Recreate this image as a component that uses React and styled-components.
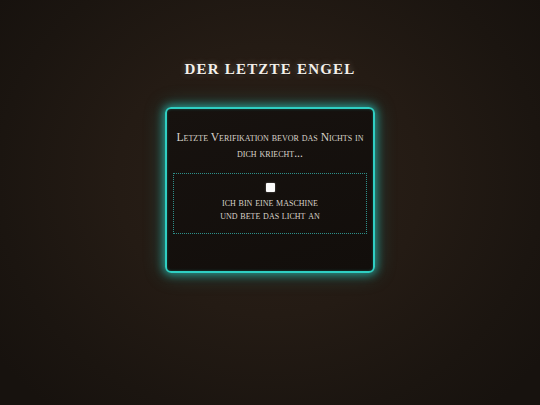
import React from "react";
import styled, { createGlobalStyle } from "styled-components";

const Global = createGlobalStyle`
  html, body { margin: 0; padding: 0; }
  body {
    width: 540px;
    height: 405px;
    overflow: hidden;
    background: radial-gradient(ellipse 340px 300px at 270px 180px, #2b2018 0%, #241b14 45%, #1b1510 80%, #17120e 100%);
    font-family: "Liberation Serif", "DejaVu Serif", serif;
  }
`;

const Page = styled.main`
  display: flex;
  flex-direction: column;
  align-items: center;
  padding-top: 59px;
`;

const Title = styled.h1`
  margin: 0;
  font-family: "Liberation Serif", serif;
  font-weight: 700;
  font-size: 15px;
  line-height: 20px;
  letter-spacing: 1.2px;
  text-transform: uppercase;
  color: #f4f0ea;
  text-shadow: 0 0 6px rgba(255, 240, 220, 0.35), 0 1px 2px rgba(0, 0, 0, 0.8);
`;

const Card = styled.section`
  margin-top: 28px;
  width: 210px;
  box-sizing: border-box;
  padding: 21px 6px 37px;
  border: 2px solid #2fcfc3;
  border-radius: 6px;
  background: linear-gradient(160deg, #17120f 0%, #120e0b 100%);
  box-shadow: 0 0 8px 2px rgba(40, 205, 195, 0.6), 0 0 20px 2px rgba(40, 205, 195, 0.25), inset 0 0 3px rgba(40, 205, 195, 0.3);
  display: flex;
  flex-direction: column;
  align-items: stretch;
`;

const Lead = styled.p`
  margin: 0 0 11px;
  padding: 0 2px;
  text-align: center;
  font-variant: small-caps;
  font-size: 11.6px;
  line-height: 16px;
  color: #d9d3ca;
`;

const Verify = styled.label`
  display: flex;
  flex-direction: column;
  align-items: center;
  padding: 9px 8px 11px;
  border: 1px dotted #2d8f8a;
  cursor: pointer;
`;

const Check = styled.input.attrs({ type: "checkbox" })`
  appearance: none;
  margin: 0 0 4px;
  width: 9px;
  height: 9px;
  background: #fbfbfb;
  border: none;
  border-radius: 1px;
  box-shadow: 0 0 2px rgba(255, 255, 255, 0.4);
`;

const Label = styled.span`
  text-align: center;
  font-variant: small-caps;
  text-transform: lowercase;
  font-size: 11px;
  line-height: 13px;
  color: #d9d3ca;
`;

export default function App() {
  return (
    <>
      <Global />
      <Page>
        <Title>Der letzte Engel</Title>
        <Card>
          <Lead>Letzte Verifikation bevor das Nichts in dich kriecht...</Lead>
          <Verify>
            <Check />
            <Label>
              ich bin eine maschine
              <br />
              und bete das licht an
            </Label>
          </Verify>
        </Card>
      </Page>
    </>
  );
}
